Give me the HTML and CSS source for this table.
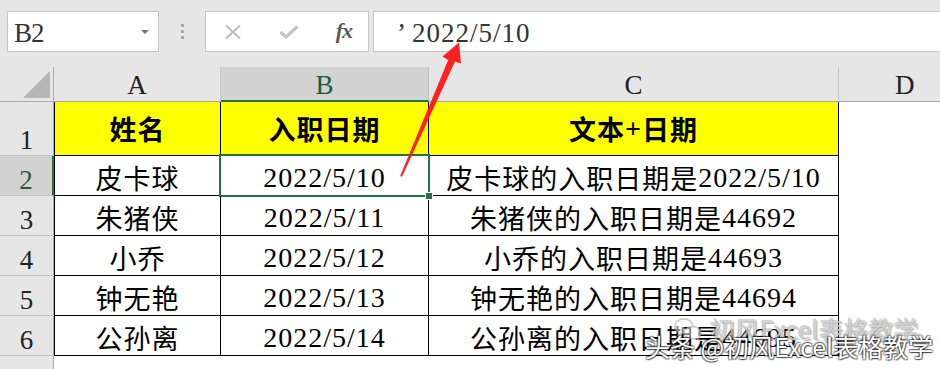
FILE: index.html
```html
<!DOCTYPE html>
<html lang="zh-CN">
<head>
<meta charset="utf-8">
<title>Excel</title>
<link rel="stylesheet" href="styles.css">
</head>
<body>
<div class="app">
  <div class="toolbar">
    <div class="namebox"><span class="nb-text">B2</span><span class="nb-caret"></span></div>
    <div class="grip"><span></span><span></span><span></span></div>
    <div class="fxbox">
      <svg class="ico" width="18" height="16" viewBox="0 0 18 16"><path d="M2 1.5 L16 14.5 M16 1.5 L2 14.5" stroke="#bdbdbd" stroke-width="2" fill="none"/></svg>
      <svg class="ico" width="20" height="14" viewBox="0 0 20 14"><path d="M1.5 7 L7 12 L18.5 1.5" stroke="#c4c4c4" stroke-width="3.2" fill="none"/></svg>
      <span class="fx">fx</span>
    </div>
    <div class="formula"><span class="apos">’</span>2022/5/10</div>
  </div>

  <div class="sheet">
    <div class="corner"><span class="tri"></span></div>
    <div class="ch">A</div>
    <div class="ch sel">B</div>
    <div class="ch">C</div>
    <div class="ch last">D</div>

    <div class="rh">1</div>
    <div class="c hd first">姓名</div>
    <div class="c hd">入职日期</div>
    <div class="c hd">文本<span class="num">+</span>日期</div>
    <div class="blank"></div>

    <div class="rh sel">2</div>
    <div class="c first">皮卡球</div>
    <div class="c active"><span class="num">2022/5/10</span><span class="handle"></span></div>
    <div class="c">皮卡球的入职日期是<span class="num">2022/5/10</span></div>
    <div class="blank"></div>

    <div class="rh">3</div>
    <div class="c first">朱猪侠</div>
    <div class="c"><span class="num">2022/5/11</span></div>
    <div class="c">朱猪侠的入职日期是<span class="num">44692</span></div>
    <div class="blank"></div>

    <div class="rh">4</div>
    <div class="c first">小乔</div>
    <div class="c"><span class="num">2022/5/12</span></div>
    <div class="c">小乔的入职日期是<span class="num">44693</span></div>
    <div class="blank"></div>

    <div class="rh">5</div>
    <div class="c first">钟无艳</div>
    <div class="c"><span class="num">2022/5/13</span></div>
    <div class="c">钟无艳的入职日期是<span class="num">44694</span></div>
    <div class="blank"></div>

    <div class="rh">6</div>
    <div class="c first">公孙离</div>
    <div class="c"><span class="num">2022/5/14</span></div>
    <div class="c">公孙离的入职日期是<span class="num">44695</span></div>
    <div class="blank"></div>

    <div class="rh top">7</div>
    <div class="blank"></div>
    <div class="blank"></div>
    <div class="blank"></div>
    <div class="blank"></div>
  </div>

  <svg class="arrow" width="940" height="369" viewBox="0 0 940 369">
    <polygon points="400.2,176 448.2,60 442.5,56.5 459,42.5 461,63.5 455,61.5 402,176.8" fill="#ff2121"/>
  </svg>

  <div class="wm wm-faint">
    <svg width="28" height="24" viewBox="0 0 28 24"><path d="M10 2 C4.5 2 1 5.5 1 9.5 C1 12 2.3 14 4.5 15.3 L3.8 18.5 L7.5 16.6 C8.4 16.9 9.3 17 10.3 17 M10 2 C15 2 19 5.2 19 9" stroke="rgba(150,150,150,0.55)" stroke-width="1.4" fill="rgba(255,255,255,0.5)"/><path d="M18.5 9.5 C23.5 9.5 27 12.4 27 16 C27 18 26 19.5 24.5 20.6 L25 23 L22 21.6 C21 21.9 19.8 22 18.6 22 C13.8 22 10.2 19.2 10.2 15.8 C10.2 12.4 13.8 9.5 18.5 9.5 Z" stroke="rgba(150,150,150,0.55)" stroke-width="1.4" fill="rgba(255,255,255,0.5)"/></svg>
    <span>初风Excel表格教学</span>
  </div>
  <div class="wm wm-main">头条 @初风Excel表格教学</div>
</div>
</body>
</html>
```

FILE: styles.css
```css
html, body {
  margin: 0;
  padding: 0;
}
body {
  width: 940px;
  height: 369px;
  overflow: hidden;
  background: #ffffff;
  font-family: "Liberation Serif", "Noto Sans CJK SC", serif;
  color: #000;
}
.app {
  position: relative;
  width: 940px;
  height: 369px;
  overflow: hidden;
}

/* ---------- toolbar ---------- */
.toolbar {
  height: 67px;
  box-sizing: border-box;
  background: #e6e6e6;
  display: flex;
  align-items: flex-start;
  padding: 11px 0 0 7px;
}
.namebox {
  width: 152px;
  height: 41px;
  box-sizing: border-box;
  background: #fff;
  border: 1px solid #c6c6c6;
  display: flex;
  align-items: center;
  justify-content: space-between;
  padding: 3px 9px 0 6px;
}
.nb-text {
  font-family: "Liberation Serif", serif;
  font-size: 27px;
  color: #333;
  letter-spacing: -1px;
}
.nb-caret {
  width: 0;
  height: 0;
  border-left: 4px solid transparent;
  border-right: 4px solid transparent;
  border-top: 4px solid #777;
  margin-top: -2px;
}
.grip {
  width: 46px;
  height: 41px;
  display: flex;
  flex-direction: column;
  align-items: center;
  justify-content: center;
  gap: 3px;
  padding-left: 1px;
  box-sizing: border-box;
}
.grip span {
  width: 3px;
  height: 3px;
  background: #a8a8a8;
}
.fxbox {
  width: 164px;
  height: 41px;
  box-sizing: border-box;
  background: #fff;
  border: 1px solid #c6c6c6;
  display: flex;
  align-items: center;
  padding: 0 16px 0 18px;
  justify-content: space-between;
}
.fx {
  font-family: "Liberation Serif", serif;
  font-style: italic;
  font-weight: bold;
  font-size: 22px;
  color: #5a5a5a;
  letter-spacing: -1px;
  margin-top: -1px;
}
.formula {
  flex: 1;
  height: 41px;
  margin-left: 4px;
  margin-right: -2px;
  box-sizing: border-box;
  background: #fff;
  border: 1px solid #c6c6c6;
  display: flex;
  align-items: center;
  padding: 3px 0 0 23px;
  font-family: "Liberation Serif", serif;
  font-size: 27px;
  letter-spacing: 1px;
  color: #333;
}
.apos {
  margin-right: 5px;
}

/* ---------- sheet ---------- */
.sheet {
  display: grid;
  grid-template-columns: 54px 167px 208px 410px 1fr;
  grid-template-rows: 35px 54px repeat(5, 40px) 40px;
}
.sheet > div {
  box-sizing: border-box;
}
.corner {
  background: #e6e6e6;
  border-right: 1px solid #ababab;
  border-bottom: 1px solid #ababab;
  position: relative;
}
.tri {
  position: absolute;
  right: 3px;
  bottom: 3px;
  width: 0;
  height: 0;
  border-left: 27px solid transparent;
  border-bottom: 27px solid #b5b5b5;
}
.ch {
  background: #e6e6e6;
  border-right: 1px solid #c8c8c8;
  border-bottom: 1px solid #a6a6a6;
  display: flex;
  align-items: center;
  justify-content: center;
  padding-top: 3px;
  font-size: 27px;
  color: #222;
}
.ch.last {
  border-right: none;
  justify-content: flex-start;
  padding-left: 56px;
}
.ch.sel {
  background: #d2d2d2;
  color: #1f5c3a;
  border-bottom: 2px solid #217346;
  border-right-color: #bdbdbd;
  padding-top: 4px;
}
.rh {
  background: #e6e6e6;
  border-right: 1px solid #ababab;
  border-bottom: 1px solid #c3c3c3;
  display: flex;
  align-items: flex-end;
  justify-content: center;
  padding-bottom: 1px;
  font-size: 27px;
  line-height: 1;
  color: #222;
}
.rh.sel {
  background: #d2d2d2;
  color: #1f5c3a;
  border-right: 2px solid #217346;
}
.rh.top {
  align-items: flex-start;
  padding-top: 9px;
  border-bottom: none;
}
.c {
  border-right: 1px solid #000;
  border-bottom: 1px solid #000;
  display: flex;
  align-items: center;
  justify-content: center;
  padding-top: 4px;
  font-size: 27px;
  letter-spacing: 1px;
  white-space: nowrap;
  position: relative;
}
.num {
  font-family: "Liberation Serif", serif;
  font-size: 28px;
}
.c.first {
  border-left: 1px solid #000;
}
.c.hd {
  background: #ffff00;
  font-weight: bold;
  padding-top: 0;
}
.c.active::after {
  content: "";
  position: absolute;
  left: -2px;
  top: -2px;
  right: -2px;
  bottom: -2px;
  border: 2px solid #217346;
}
.handle {
  position: absolute;
  right: -5px;
  bottom: -5px;
  width: 6px;
  height: 6px;
  background: #217346;
  border: 1px solid #fff;
  z-index: 2;
}
.blank {
  background: #fff;
}

/* ---------- overlays ---------- */
.arrow {
  position: absolute;
  left: 0;
  top: 0;
  pointer-events: none;
}
.wm {
  position: absolute;
  font-family: "Noto Sans CJK SC", "Liberation Sans", sans-serif;
  white-space: nowrap;
}
.wm-faint {
  left: 674px;
  top: 314px;
  display: flex;
  align-items: center;
  gap: 8px;
  font-size: 25px;
  color: rgba(255, 255, 255, 0.55);
  text-shadow: 0 0 1px rgba(120, 120, 120, 0.6), 1px 1px 1px rgba(120, 120, 120, 0.45), -1px -1px 1px rgba(120, 120, 120, 0.3);
  line-height: 30px;
}
.wm-main {
  left: 645px;
  top: 330px;
  font-size: 25px;
  line-height: 32px;
  color: #ffffff;
  text-shadow: 1px 1px 1px rgba(0, 0, 0, 0.55), -1px -1px 1px rgba(0, 0, 0, 0.45), 1px -1px 1px rgba(0, 0, 0, 0.45), -1px 1px 1px rgba(0, 0, 0, 0.45);
}
```
